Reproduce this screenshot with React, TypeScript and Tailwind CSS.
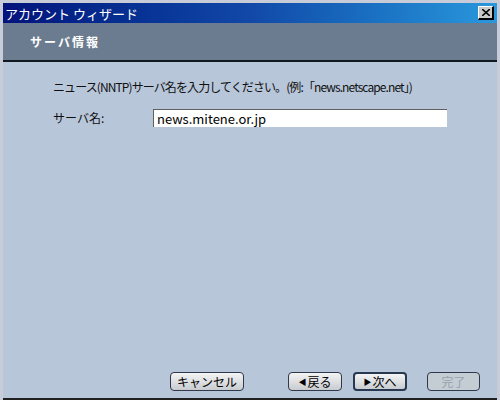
import React from "react";

const jp = { fontFamily: '"Noto Sans CJK JP", "Liberation Sans", sans-serif' };

function WizButton({
  children,
  primary,
  disabled,
  w,
}: {
  children: React.ReactNode;
  primary?: boolean;
  disabled?: boolean;
  w: string;
}) {
  return (
    <div
      className={`${w} shrink-0 whitespace-nowrap h-[19px] rounded-[4px] flex items-center justify-center text-[12px] leading-none ${
        primary ? "border-2 border-[#283850]" : "border border-[#30384a]"
      } ${
        disabled
          ? "bg-[#c4ccd4] text-[#98a0aa] border-[#8a94a2]"
          : "bg-gradient-to-b from-[#f4f4f4] to-[#c8ccd0] text-black"
      }`}
    >
      {children}
    </div>
  );
}

export default function App() {
  return (
    <div
      className="w-[500px] h-[400px] bg-[#c8ccd8] pt-[3px] pl-[3px] pr-[3px] flex flex-col overflow-hidden"
      style={jp}
    >
      {/* title bar */}
      <div className="h-[20px] flex items-center justify-between pl-[2px] pr-[3px] bg-gradient-to-r from-[#04127c] via-[#1248a8] to-[#2a98dc]">
        <span className="text-white text-[13px] leading-none">アカウント ウィザード</span>
        <div className="w-[16px] h-[14px] bg-[#c8c8c8] border-t border-l border-white border-r-2 border-b-2 border-r-black border-b-black flex items-center justify-center">
          <svg width="8" height="7" viewBox="0 0 8 7">
            <path d="M0 0L8 7M8 0L0 7" stroke="#000" strokeWidth="1.6" />
          </svg>
        </div>
      </div>
      {/* header band */}
      <div className="h-[39px] bg-[#6c7c90] border-b-2 border-[#101820] flex items-center pl-[27px]">
        <span className="text-white font-bold text-[12px] tracking-[2px]">サーバ情報</span>
      </div>
      {/* body */}
      <div className="flex-1 bg-[#b8c6da] border-b-2 border-[#202020] flex flex-col pl-[50px]">
        <div className="mt-[17px] text-[12px] text-[#101010] leading-[16px] whitespace-nowrap tracking-[-0.9px]">
          ニュース(NNTP)サーバ名を入力してください。(例:「news.netscape.net」)
        </div>
        <div className="mt-[14px] flex items-center">
          <span className="w-[100px] shrink-0 text-[12px] text-[#101010]">サーバ名:</span>
          <div className="w-[294px] shrink-0 h-[18px] bg-white border-t border-l border-[#606060] flex items-center pl-[3px] text-[13px] text-black">
            news.mitene.or.jp
          </div>
        </div>
        <div className="flex-1" />
        <div className="mb-[7px] flex items-center pl-[117px]">
          <WizButton w="w-[74px]">キャンセル</WizButton>
          <div className="ml-[44px] shrink-0">
            <WizButton w="w-[54px]">
              <span className="text-[8px] mr-[1px]">◀</span>戻る
            </WizButton>
          </div>
          <div className="ml-[11px] shrink-0">
            <WizButton w="w-[54px]" primary>
              <span className="text-[8px] mr-[1px]">▶</span>次へ
            </WizButton>
          </div>
          <div className="ml-[20px] shrink-0">
            <WizButton w="w-[53px]" disabled>
              完了
            </WizButton>
          </div>
        </div>
      </div>
    </div>
  );
}
